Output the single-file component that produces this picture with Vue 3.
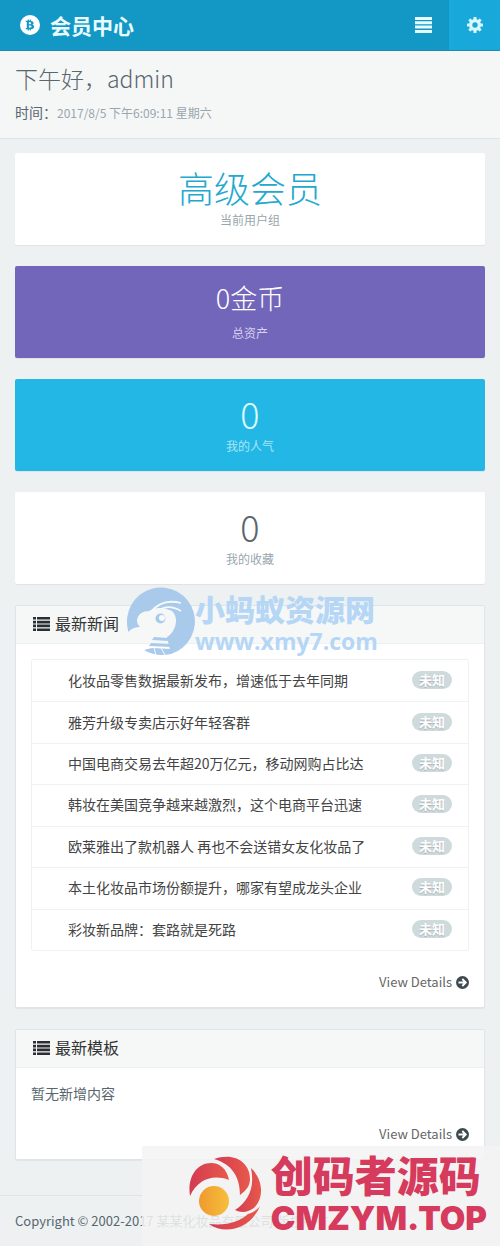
<script setup>
import { ref } from 'vue'

const now = ref('2017/8/5 下午6:09:11 星期六')

const stats = [
  { value: '高级会员', label: '当前用户组', type: 'level' },
  { value: '0金币', label: '总资产', type: 'coins' },
  { value: '0', label: '我的人气', type: 'popular' },
  { value: '0', label: '我的收藏', type: 'favorite' },
]

const news = [
  '化妆品零售数据最新发布，增速低于去年同期',
  '雅芳升级专卖店示好年轻客群',
  '中国电商交易去年超20万亿元，移动网购占比达',
  '韩妆在美国竞争越来越激烈，这个电商平台迅速',
  '欧莱雅出了款机器人 再也不会送错女友化妆品了',
  '本土化妆品市场份额提升，哪家有望成龙头企业',
  '彩妆新品牌：套路就是死路',
]
</script>

<template>
  <div class="page">
    <nav class="navbar">
      <a href="#" class="brand">
        <svg class="brand-icon" viewBox="0 0 20 20" aria-hidden="true">
          <circle cx="10" cy="10" r="10" fill="#fff" />
          <path
            d="M5.8 5.8h1.9V4.5h1.2v1.3h.8V4.5h1.2v1.4c1.8.2 2.7.9 2.7 2.1 0 .8-.5 1.4-1.3 1.7 1.2.3 1.8 1 1.8 2 0 1.5-1.1 2.3-3.2 2.5v1.4H9.7v-1.4h-.8v1.4H7.700v-1.400H5.800v-1.300h1V7.100h-1zM8.900 7.200v2h.7c1 0 1.500-.3 1.500-1s-.5-1-1.500-1zm0 3.200v2.300h.9c1.100 0 1.700-.4 1.700-1.200s-.6-1.100-1.700-1.100z"
            fill="#1398c6"
            fill-rule="evenodd"
          />
        </svg>
        <span>会员中心</span>
      </a>
      <div class="nav-actions">
        <button type="button" class="nav-btn" aria-label="菜单">
          <svg width="17" height="16" viewBox="0 0 17 16" aria-hidden="true">
            <path d="M0 0h17v3H0zM0 4.300h17v3H0zM0 8.600h17v3H0zM0 13h17v3H0z" fill="#e4fbff" />
          </svg>
        </button>
        <button type="button" class="nav-btn active" aria-label="设置">
          <svg width="16" height="16" viewBox="0 0 16 16" aria-hidden="true">
            <g fill="#d9f7ff">
              <rect
                v-for="angle in [0, 45, 90, 135]"
                :key="angle"
                x="6.500"
                y="0"
                width="3"
                height="16"
                rx=".5"
                :transform="`rotate(${angle} 8 8)`"
              />
              <circle cx="8" cy="8" r="6" />
            </g>
            <circle cx="8" cy="8" r="2.700" fill="#18a9da" />
          </svg>
        </button>
      </div>
    </nav>

    <header class="page-header">
      <h1>下午好，admin</h1>
      <p>时间：<small>{{ now }}</small></p>
    </header>

    <main class="content">
      <section v-for="item in stats" :key="item.label" class="stat" :class="item.type">
        <strong>{{ item.value }}</strong>
        <span>{{ item.label }}</span>
      </section>

      <section class="panel">
        <h2 class="panel-title">
          <svg width="17" height="14" viewBox="0 0 17 14" aria-hidden="true">
            <path d="M0 0h3v2.600H0zM4 0h13v2.600H4zM0 3.800h3v2.600H0zM4 3.800h13v2.600H4zM0 7.600h3v2.600H0zM4 7.600h13v2.600H4zM0 11.400h3v2.600H0zM4 11.400h13v2.600H4z" fill="#2b2f31" />
          </svg>
          最新新闻
        </h2>
        <div class="panel-body">
          <ul class="news">
            <li v-for="title in news" :key="title">
              <a href="#">{{ title }}</a>
              <span class="badge">未知</span>
            </li>
          </ul>
          <a href="#" class="details">
            View Details
            <svg width="13" height="13" viewBox="0 0 13 13" aria-hidden="true">
              <circle cx="6.500" cy="6.500" r="6.500" fill="#3f4a4f" />
              <path d="M2.500 6.500h7M6.300 3l3.500 3.500L6.300 10" fill="none" stroke="#fff" stroke-width="1.800" />
            </svg>
          </a>
        </div>
        <div class="ant-mark">
          <svg width="68" height="70" viewBox="0 0 68 70" aria-hidden="true">
            <path
              d="M1 43A34 34 0 1 1 44 67L40 50C44 48 49 41 49 34C49 30 48 27 45 24C36 20 28 20 22 24C16 24 11 27 10 33C10 36 11 38 13 40C9 40 5 41 1 45z"
              fill="#a9caeb"
            />
            <path d="M24 25C31 16 42 13 54 16M34 22C40 19 47 20 54 24" fill="none" stroke="#f7fafc" stroke-width="1.800" />
            <circle cx="33.500" cy="31.500" r="5" fill="#a9caeb" />
            <circle cx="35" cy="31" r="3" fill="#f7fafc" />
            <path d="M27 50l14 1 1 3-17-1zM24 56l19 1 1 3-22-1zM17 63c4-1 6-2 9-2l18 1v5c-9 2-19 1-27-4z" fill="#a9caeb" />
            <path d="M34 61l4 7M27 61l2 7" stroke="#f7fafc" />
          </svg>
          <div class="ant-text">
            <b>小蚂蚁资源网</b>
            <i>www.xmy7.com</i>
          </div>
        </div>
      </section>

      <section class="panel">
        <h2 class="panel-title">
          <svg width="17" height="14" viewBox="0 0 17 14" aria-hidden="true">
            <path d="M0 0h3v2.600H0zM4 0h13v2.600H4zM0 3.800h3v2.600H0zM4 3.800h13v2.600H4zM0 7.600h3v2.600H0zM4 7.600h13v2.600H4zM0 11.400h3v2.600H0zM4 11.400h13v2.600H4z" fill="#2b2f31" />
          </svg>
          最新模板
        </h2>
        <div class="panel-body">
          <p class="empty">暂无新增内容</p>
          <a href="#" class="details">
            View Details
            <svg width="13" height="13" viewBox="0 0 13 13" aria-hidden="true">
              <circle cx="6.500" cy="6.500" r="6.500" fill="#3f4a4f" />
              <path d="M2.500 6.500h7M6.300 3l3.500 3.500L6.300 10" fill="none" stroke="#fff" stroke-width="1.800" />
            </svg>
          </a>
        </div>
      </section>
    </main>

    <footer class="footer">
      Copyright © 2002-2017 某某化妆品有限公司 版权所有.
      <div class="source-mark">
        <svg width="74" height="76" viewBox="0 0 74 76" aria-hidden="true">
          <defs>
            <linearGradient id="swirl" x1="0" y1="0" x2="1" y2="0">
              <stop offset="0" stop-color="#d33b52" />
              <stop offset="1" stop-color="#e8594a" />
            </linearGradient>
            <linearGradient id="sun" x1="0" y1="0" x2="1" y2="0">
              <stop offset="0" stop-color="#ef9a2e" />
              <stop offset="1" stop-color="#f6bf3c" />
            </linearGradient>
          </defs>
          <g fill="url(#swirl)">
            <path d="M1 41C-2 22 8 8 22 8c9 0 16 6 18 17-16-6-31-1-39 16z" />
            <path d="M25 4c20-7 36 3 36 20 0 6-3 11-10 16 0-18-8-31-26-36z" />
            <path d="M62 13c11 10 14 28 4 39-7 6-14 6-20 3 14-9 20-23 16-42z" />
            <path d="M71 51c-9 22-34 30-51 18 19 2 31-3 39-10 6-2 9-4 12-8z" />
          </g>
          <circle cx="25" cy="46" r="15" fill="url(#sun)" />
        </svg>
        <div class="source-text">
          <b>创码者源码</b>
          <i>CMZYM.TOP</i>
        </div>
      </div>
    </footer>
  </div>
</template>

<style>
body {
  background: #edf1f2;
}
</style>

<style scoped>
.page {
  background: #edf1f2;
  color: #58666e;
  font-family: "Noto Sans CJK SC", sans-serif;
  font-size: 14px;
  line-height: 20px;
}

a {
  color: inherit;
  text-decoration: none;
}

.navbar {
  display: flex;
  justify-content: space-between;
  height: 50px;
  background: #1398c6;
  border-bottom: 1px solid #2089b0;
}

.brand {
  display: flex;
  align-items: center;
  gap: 10px;
  padding-left: 20px;
  color: #e9fcff;
  font-size: 21px;
  font-weight: 700;
}

.brand-icon {
  width: 20px;
  height: 20px;
}

.nav-actions {
  display: flex;
}

.nav-btn {
  display: flex;
  align-items: center;
  justify-content: center;
  width: 51px;
  padding: 0;
  border: 0;
  background: none;
}

.nav-btn.active {
  background: #18a9da;
}

.page-header {
  padding: 13px 15px 15px;
  background: #f5f7f7;
  border-bottom: 1px solid #dfe4e5;
}

.page-header h1 {
  margin: 0 0 10px;
  font-size: 23px;
  font-weight: 300;
  line-height: 28px;
}

.page-header p {
  margin: 0;
}

.page-header small {
  color: #98a6ad;
  font-size: 12px;
}

.content {
  display: flex;
  flex-direction: column;
  gap: 21px;
  padding: 14px 15px 35px;
}

.stat {
  display: flex;
  flex-direction: column;
  align-items: center;
  padding: 15px 0;
  background: #fff;
  border-radius: 2px;
  box-shadow: 0 1px 1px rgba(0, 0, 0, 0.06);
}

.stat strong {
  margin-bottom: 3px;
  font-size: 36px;
  font-weight: 300;
  line-height: 39px;
}

.stat span {
  color: #98a6ad;
  font-size: 12px;
}

.level strong {
  color: #23a9cf;
}

.coins {
  padding: 12px 0 15px;
  background: #7266ba;
}

.coins strong {
  margin-bottom: 6px;
  color: #fff;
  font-size: 27px;
}

.coins span {
  color: #d6d0f0;
}

.popular {
  background: #23b7e5;
}

.popular strong {
  color: #d9fbff;
}

.popular span {
  color: #a9e6f8;
}

.panel {
  position: relative;
  background: #fff;
  border: 1px solid #dee5e7;
  border-radius: 2px;
  box-shadow: 0 1px 1px rgba(0, 0, 0, 0.05);
}

.panel-title {
  display: flex;
  align-items: center;
  gap: 5px;
  margin: 0;
  padding: 7px 17px 9px;
  background: #f6f8f8;
  border-bottom: 1px solid #edf1f2;
  color: #333;
  font-size: 16px;
  font-weight: 400;
  line-height: 21px;
}

.panel-body {
  padding: 15px;
}

.news {
  display: grid;
  grid-auto-rows: 1fr;
  min-height: 290px;
  margin: 0 0 21px;
  padding: 0;
  border: 1px solid #eff2f3;
  border-radius: 2px;
  list-style: none;
}

.news li {
  display: flex;
  align-items: center;
  justify-content: space-between;
  padding: 0 16px 2px 36px;
  color: #444;
}

.news li + li {
  border-top: 1px solid #eff2f3;
}

.badge {
  padding: 0 7px;
  border-radius: 9px;
  background: #cfdadd;
  color: #fff;
  font-size: 13px;
  font-weight: 700;
  line-height: 18px;
  text-shadow: 0 1px 1px rgba(0, 0, 0, 0.2);
}

.details {
  display: flex;
  align-items: center;
  justify-content: flex-end;
  gap: 4px;
  color: #666;
  font-size: 13px;
}

.empty {
  margin: 0 0 21px;
}

.ant-mark {
  position: absolute;
  top: -19px;
  left: 111px;
  display: flex;
  pointer-events: none;
}

.ant-text {
  display: flex;
  flex-direction: column;
  color: #b5d6f5;
}

.ant-text b {
  font-size: 30px;
  font-weight: 900;
  line-height: 42px;
}

.ant-text i {
  font-family: "Open Sans", sans-serif;
  font-size: 23px;
  font-style: normal;
  font-weight: 700;
  line-height: 24px;
}

.footer {
  position: relative;
  padding: 15px;
  border-top: 1px solid #dee5e7;
  font-size: 13px;
}

.source-mark {
  position: absolute;
  right: 0;
  bottom: 0;
  display: flex;
  align-items: center;
  gap: 8px;
  box-sizing: border-box;
  height: 100px;
  padding: 0 13px 6px 47px;
  background: rgba(243, 243, 243, 0.86);
}

.source-text {
  display: flex;
  flex-direction: column;
  color: #d63a5c;
}

.source-text b {
  font-size: 42px;
  font-weight: 900;
  line-height: 50px;
}

.source-text i {
  font-family: Inter, sans-serif;
  font-size: 33px;
  font-style: normal;
  font-weight: 900;
  line-height: 38px;
}
</style>
